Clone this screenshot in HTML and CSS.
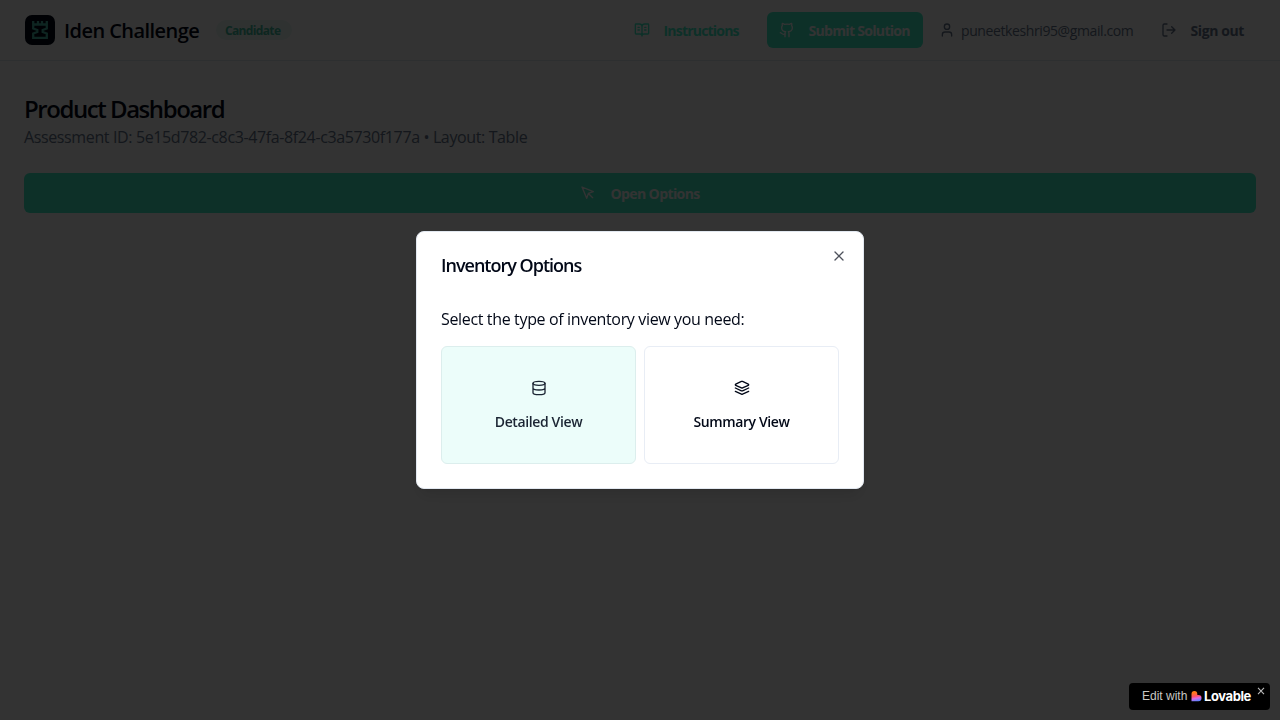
FILE: index.html
```html
<!DOCTYPE html>
<html lang="en">
<head>
<meta charset="utf-8">
<title>Iden Challenge</title>
<link rel="stylesheet" href="styles.css">
</head>
<body>
<header class="topbar">
  <div class="brand">
    <svg class="logo" viewBox="0 0 32 32"><rect x="1" y="1" width="30" height="30" rx="7" fill="#020817"/><path d="M9.200 7V14.500L13.300 16V18L9.200 19.500V23.800H22.800V19.500L18.700 18V16L22.800 14.500V7M9 10.500H23M14 7V10M18 7V10" fill="none" stroke="#48b8a4" stroke-width="2.300"/></svg>
    <span class="brand-name">Iden Challenge</span>
    <span class="badge"><span>Candidate</span></span>
  </div>
  <nav class="actions">
    <button class="btn link"><svg class="icon" viewBox="0 0 24 24"><path d="M12 7v14M16 12h2M16 8h2M6 12h2M6 8h2M3 18a1 1 0 0 1-1-1V4a1 1 0 0 1 1-1h5a4 4 0 0 1 4 4 4 4 0 0 1 4-4h5a1 1 0 0 1 1 1v13a1 1 0 0 1-1 1h-6a3 3 0 0 0-3 3 3 3 0 0 0-3-3z"/></svg><span class="label label-instructions">Instructions</span></button>
    <button class="btn solid"><svg class="icon" viewBox="0 0 24 24"><path d="M15 22v-4a4.800 4.800 0 0 0-1-3.500c3 0 6-2 6-5.500.08-1.250-.27-2.480-1-3.500.28-1.150.28-2.350 0-3.500 0 0-1 0-3 1.500-2.640-.5-5.360-.5-8 0C6 2 5 2 5 2c-.3 1.150-.3 2.350 0 3.500A5.403 5.403 0 0 0 4 9c0 3.500 3 5.500 6 5.500-.39.49-.68 1.050-.85 1.650-.17.6-.22 1.230-.15 1.850v4"/><path d="M9 18c-4.510 2-5-2-7-2"/></svg><span class="label label-submit">Submit Solution</span></button>
    <div class="user"><svg class="icon" viewBox="0 0 24 24"><path d="M19 21v-2a4 4 0 0 0-4-4H9a4 4 0 0 0-4 4v2"/><circle cx="12" cy="7" r="4"/></svg><span class="email">puneetkeshri95@gmail.com</span></div>
    <button class="btn quiet"><svg class="icon" viewBox="0 0 24 24"><path d="M9 21H5a2 2 0 0 1-2-2V5a2 2 0 0 1 2-2h4M16 17l5-5-5-5M21 12H9"/></svg><span class="label label-signout">Sign out</span></button>
  </nav>
</header>
<main class="content">
  <h1 class="title">Product Dashboard</h1>
  <p class="subtitle">Assessment ID: 5e15d782-c8c3-47fa-8f24-c3a5730f177a • Layout: Table</p>
  <button class="open-options"><svg class="icon" viewBox="0 0 24 24"><path d="m3 3 7.070 16.970 2.510-7.390 7.390-2.510L3 3zM13 13l6 6"/></svg><span class="label label-open">Open Options</span></button>
</main>
<div class="overlay">
  <section class="dialog" role="dialog" aria-labelledby="dialog-title">
    <h2 class="dialog-title" id="dialog-title">Inventory Options</h2>
    <button class="close" aria-label="Close"><svg class="icon" viewBox="0 0 24 24"><path d="M18 6 6 18M6 6l12 12"/></svg></button>
    <p class="prompt">Select the type of inventory view you need:</p>
    <div class="choices">
      <button class="choice active"><svg class="icon" viewBox="0 0 24 24"><ellipse cx="12" cy="5" rx="9" ry="3"/><path d="M3 5v14a9 3 0 0 0 18 0V5M3 12a9 3 0 0 0 18 0"/></svg><span class="choice-label">Detailed View</span></button>
      <button class="choice"><svg class="icon" viewBox="0 0 24 24"><path d="m12.830 2.180a2 2 0 0 0-1.660 0L2.600 6.080a1 1 0 0 0 0 1.830l8.580 3.910a2 2 0 0 0 1.660 0l8.580-3.900a1 1 0 0 0 0-1.830ZM22 12l-9.170 4.160a2 2 0 0 1-1.660 0L2 12M22 17l-9.170 4.160a2 2 0 0 1-1.660 0L2 17"/></svg><span class="choice-label">Summary View</span></button>
    </div>
  </section>
</div>
<aside class="lovable">
  <span class="edit">Edit with</span>
  <svg class="heart" viewBox="0 0 12 12"><defs><linearGradient id="warm" x1="0.3" y1="0" x2=".5" y2="1"><stop offset=".15" stop-color="#ff7a1a"/><stop offset=".5" stop-color="#ff5268"/><stop offset=".72" stop-color="#d66be8"/><stop offset="1" stop-color="#5c82ff"/></linearGradient></defs><path d="M.5 4a2.900 2.900 0 0 1 5.800 0V5H7.500a3 3 0 0 1 3 3.200 3 3 0 0 1-3 3H.5Z" fill="url(#warm)"/></svg>
  <span class="wordmark">Lovable</span>
  <svg class="dismiss" viewBox="0 0 8 8"><path d="M1 .8l6 6.400M7 .8l-6 6.400"/></svg>
</aside>
</body>
</html>
```
FILE: styles.css
```css
* { box-sizing: border-box; }
body { margin: 0; height: 720px; overflow: hidden; background: #fff; color: #020817; font-family: "Open Sans", "Noto Sans", sans-serif; font-size: 14px; }
button { font: inherit; color: inherit; margin: 0; border: 0; background: none; padding: 0; }
h1, h2, p { margin: 0; white-space: nowrap; }
.icon { width: 16px; height: 16px; flex: none; fill: none; stroke: currentColor; stroke-width: 2; stroke-linecap: round; stroke-linejoin: round; }
.topbar { height: 61px; padding: 0 24px; display: flex; align-items: center; justify-content: space-between; border-bottom: 1px solid #e2e8f0; }
.brand, .actions, .user, .btn { display: flex; align-items: center; white-space: nowrap; }
.logo { width: 32px; height: 32px; margin-right: 8px; }
.brand-name { width: 136px; font-size: 20px; font-weight: 600; letter-spacing: -0.55px; line-height: 28px; padding-top: 1px; }
.badge { width: 76px; height: 20px; margin-left: 16px; padding-left: 9px; border-radius: 10px; background: #eafaf6; color: #41bd9e; font-size: 12px; font-weight: 700; line-height: 21px; letter-spacing: -0.65px; }
.actions { gap: 16px; }
.btn { height: 36px; padding: 0 12px; gap: 13.5px; border-radius: 6px; font-weight: 600; }
.label { display: block; flex: none; white-space: nowrap; text-align: left; line-height: 20px; padding-top: 1px; }
.label-instructions { width: 75.5px; font-weight: 700; letter-spacing: -0.8px; }
.label-submit { width: 102.5px; font-weight: 700; letter-spacing: -0.68px; }
.label-signout { width: 53.5px; font-weight: 700; letter-spacing: -0.4px; }
.label-open { width: 90px; padding-top: 2px; font-weight: 700; letter-spacing: -0.6px; }
.link { color: #42f0c8; }
.solid, .open-options { color: #fff; background: #42f0c8; }
.user { gap: 6px; color: #64748b; }
.email { width: 172px; line-height: 20px; padding-top: 1px; letter-spacing: -0.4px; }
.quiet { color: #64748b; }
.content { padding: 32px 24px; display: flex; flex-direction: column; }
.title { font-size: 24px; font-weight: 600; line-height: 32px; letter-spacing: -1.45px; }
.subtitle { font-size: 16px; line-height: 24px; color: #64748b; letter-spacing: -0.375px; }
.open-options { height: 40px; margin-top: 24px; border-radius: 6px; display: flex; align-items: center; justify-content: center; gap: 15px; font-weight: 600; }
.overlay { position: fixed; inset: 0; background: rgba(0, 0, 0, .8); display: flex; align-items: center; justify-content: center; }
.dialog { position: relative; width: 448px; height: 258px; padding: 23px 24px 24px; border: 1px solid #e2e8f0; border-radius: 8px; background: #fff; box-shadow: 0 10px 15px -3px rgba(0, 0, 0, .1), 0 4px 6px -4px rgba(0, 0, 0, .1); display: flex; flex-direction: column; }
.dialog-title { font-size: 18px; font-weight: 600; line-height: 20px; letter-spacing: -1px; }
.close { position: absolute; top: 16px; right: 16px; width: 16px; height: 16px; color: #4e525c; }
.close .icon { display: block; }
.prompt { margin-top: 32px; font-size: 16px; line-height: 24px; letter-spacing: -0.35px; }
.choices { margin-top: 15px; display: grid; grid-template-columns: 1fr 1fr; gap: 8px; }
.choice { height: 118px; border: 1px solid #e8edf5; border-radius: 6px; display: flex; flex-direction: column; align-items: center; justify-content: center; gap: 16px; line-height: 20px; font-weight: 600; letter-spacing: -0.38px; padding-top: 1px; }
.active { background: #ecfdfa; border-color: #dceeed; color: #1b2533; }
.lovable { position: fixed; right: 10px; bottom: 10px; width: 141px; height: 27px; padding-left: 13px; padding-bottom: 1px; border-radius: 4px; background: #000; color: #fff; display: flex; align-items: center; white-space: nowrap; font-family: "Liberation Sans", sans-serif; font-size: 12px; }
.edit { width: 46px; color: #c9c8c4; }
.heart { width: 12px; height: 12px; margin-left: 3px; margin-right: 1px; }
.wordmark { font-family: Inter, sans-serif; font-weight: 700; font-size: 13px; letter-spacing: -0.4px; }
.dismiss { position: absolute; right: 5px; top: 4px; width: 8px; height: 8px; fill: none; stroke: #bbb; stroke-width: 1.100; }
```
